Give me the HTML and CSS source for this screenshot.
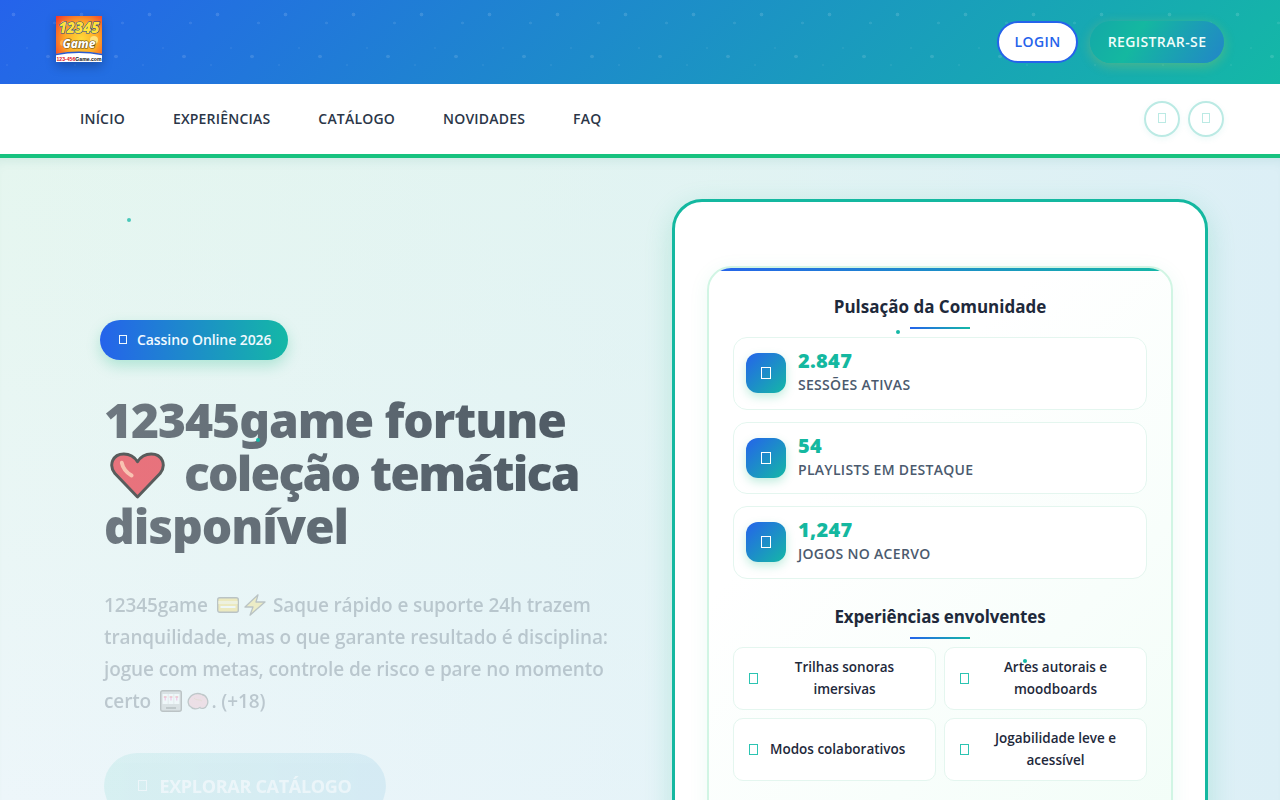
FILE: index.html
```html
<!DOCTYPE html>
<html lang="pt-BR">
<head>
<meta charset="utf-8">
<title>12345game</title>
<link rel="stylesheet" href="styles.css">
</head>
<body>
<header class="topbar">
  <a class="logo" href="#">
    <svg width="46" height="46" viewBox="0 0 46 46" aria-label="12345 Game">
      <defs>
        <radialGradient id="lg" cx="55%" cy="50%" r="72%"><stop offset="0" stop-color="#ffd93a"/><stop offset=".5" stop-color="#fda925"/><stop offset="1" stop-color="#f3382c"/></radialGradient>
      </defs>
      <rect width="46" height="46" fill="url(#lg)"/>
      <circle cx="8" cy="8" r="3" fill="#ffc46a"/><circle cx="38" cy="24" r="4" fill="#ffe27a"/><circle cx="7" cy="27" r="3" fill="#ffb04a"/>
      <text x="23" y="17" class="logo-num" text-anchor="middle" textLength="41" lengthAdjust="spacingAndGlyphs">12345</text>
      <text x="23" y="32" class="logo-game" text-anchor="middle" textLength="33" lengthAdjust="spacingAndGlyphs">Game</text>
      <path d="M0 38 Q23 34 46 38 V46 H0Z" fill="#fff"/>
      <path d="M0 38.5 Q23 34 46 38.5" fill="none" stroke="#2a5bd0" stroke-width="1.4"/>
      <text x="0.5" y="45" class="logo-url" textLength="45" lengthAdjust="spacingAndGlyphs"><tspan fill="#e01020">123-456</tspan><tspan fill="#111">Game.com</tspan></text>
    </svg>
  </a>
  <div class="auth">
    <a class="btn-login" href="#">LOGIN</a>
    <a class="btn-register" href="#">REGISTRAR-SE</a>
  </div>
</header>
<nav class="mainnav">
  <ul class="navlinks">
    <li><a href="#">INÍCIO</a></li>
    <li><a href="#">EXPERIÊNCIAS</a></li>
    <li><a href="#">CATÁLOGO</a></li>
    <li><a href="#">NOVIDADES</a></li>
    <li><a href="#">FAQ</a></li>
  </ul>
  <div class="navicons">
    <span class="circle"><i class="tofu"></i></span>
    <span class="circle"><i class="tofu"></i></span>
  </div>
</nav>
<main class="hero">
  <i class="spark s1"></i><i class="spark s2"></i><i class="spark s3"></i><i class="spark s4"></i>
  <section class="intro">
    <div class="badge"><i class="tofu"></i><span>Cassino Online 2026</span></div>
    <h1>12345game fortune<br><svg class="heart" viewBox="0 0 56 50"><path d="M28 47 L5 23 C-2 14 3 3 14 3 C20 3 25 6 28 11 C31 6 36 3 42 3 C53 3 58 14 51 23 Z" fill="#e8414f" stroke="#222" stroke-width="3" stroke-linejoin="round"/><path d="M12 12 C13 17 17 22 22 25" fill="none" stroke="#ffb09a" stroke-width="4" stroke-linecap="round"/></svg><span class="tight">coleção temática</span><br>disponível</h1>
    <p class="lead">12345game
      <svg class="emoji em-first" viewBox="0 0 22 22"><rect x="0.7" y="3.7" width="20.6" height="14.6" rx="2" fill="#f7c81e" stroke="#333" stroke-width="1.4"/><rect x="1.4" y="7" width="19.2" height="3" fill="#ffe99a"/><rect x="3.5" y="12" width="15" height="2" fill="#fff"/></svg><svg class="emoji" viewBox="0 0 22 22"><path d="M14 0.8 L1 13 H9 L6 21.2 L21 8 H12 Z" fill="#f8d23a" stroke="#333" stroke-width="1.3" stroke-linejoin="round"/></svg>
      Saque rápido e suporte 24h trazem tranquilidade, mas o que garante resultado é disciplina: jogue com metas, controle de risco e pare no momento certo
      <svg class="emoji em-first" viewBox="0 0 22 22"><rect x="0.7" y="0.7" width="20.6" height="20.6" rx="2" fill="#aaa" stroke="#333" stroke-width="1.4"/><rect x="2.6" y="4" width="5.2" height="10" fill="#fff"/><rect x="8.4" y="4" width="5.2" height="10" fill="#fff"/><rect x="14.2" y="4" width="5.2" height="10" fill="#fff"/><path d="M3.8 7h2.8M9.6 7h2.8M15.4 7h2.8" stroke="#e33" stroke-width="1.4"/><path d="M5.2 7v3.5M11 7v3.5M16.8 7v3.5" stroke="#f2a" stroke-width="1"/><rect x="6" y="17" width="10" height="2" fill="#444"/></svg><svg class="emoji" viewBox="0 0 22 22"><path d="M2.5 8 C4.5 3.5 11 2.5 15 4.5 C20 5.5 22 11.5 20 15 C18.5 19 14 19 13 17.5 C10 19.5 5.5 19 4 17 C0.5 15.5 0.5 10 2.5 8Z" fill="#f4a0b5" stroke="#444" stroke-width="1.3"/><path d="M7 8 C9 11 13 9 15 11" fill="none" stroke="#c96" stroke-width=".8"/></svg>. (+18)</p>
    <a class="cta" href="#"><i class="tofu"></i><span>EXPLORAR CATÁLOGO</span></a>
  </section>
  <aside class="device">
    <div class="panel">
      <h2>Pulsação da Comunidade</h2>
      <div class="stats">
        <div class="stat"><span class="stat-icon"><i class="tofu"></i></span><div class="stat-text"><strong>2.847</strong><span>SESSÕES ATIVAS</span></div></div>
        <div class="stat"><span class="stat-icon"><i class="tofu"></i></span><div class="stat-text"><strong>54</strong><span>PLAYLISTS EM DESTAQUE</span></div></div>
        <div class="stat"><span class="stat-icon"><i class="tofu"></i></span><div class="stat-text"><strong>1,247</strong><span>JOGOS NO ACERVO</span></div></div>
      </div>
      <h2 class="second">Experiências envolventes</h2>
      <div class="features">
        <div class="feature"><i class="tofu"></i><span>Trilhas sonoras imersivas</span></div>
        <div class="feature"><i class="tofu"></i><span>Artes autorais e moodboards</span></div>
        <div class="feature"><i class="tofu"></i><span>Modos colaborativos</span></div>
        <div class="feature"><i class="tofu"></i><span>Jogabilidade leve e acessível</span></div>
      </div>
    </div>
  </aside>
</main>
</body>
</html>
```
FILE: styles.css
```css
* { box-sizing: border-box; }
html, body { margin: 0; height: 800px; overflow: hidden; }
body { font-family: "Open Sans", "Noto Sans", sans-serif; color: #1e293b; background: #fff; }
a { text-decoration: none; color: inherit; }
ul { list-style: none; margin: 0; padding: 0; }
i { font-style: normal; }

.tofu { display: inline-block; width: 9px; height: 11px; border: 1px solid currentColor; flex: none; }

.topbar {
  height: 84px; padding: 0 56px; display: flex; align-items: center; justify-content: space-between;
  background-color: #14b8a6;
  background-image:
    radial-gradient(circle at 13.5px 14.5px, rgba(255,255,255,.13) 1.5px, transparent 2.2px),
    radial-gradient(circle at 54.5px 23px, rgba(255,255,255,.09) 1.1px, transparent 1.7px),
    radial-gradient(circle at 48px 56.5px, rgba(255,255,255,.12) 1.5px, transparent 2.1px),
    radial-gradient(circle at 27px 48px, rgba(255,255,255,.05) 1px, transparent 1.5px),
    radial-gradient(circle at 7px 65px, rgba(255,255,255,.05) 1px, transparent 1.5px),
    linear-gradient(135deg, #2563eb 0%, #14b8a6 100%);
  background-size: 68px 84px, 68px 84px, 68px 84px, 68px 84px, 68px 84px, 100% 100%;
}
.logo { display: block; width: 46px; height: 46px; margin-top: -6px; box-shadow: 0 4px 10px rgba(0,0,0,.25); }
.logo svg { display: block; }
.logo-num { font: italic 900 15px "Noto Sans", sans-serif; fill: #ffe23a; stroke: #124a9c; stroke-width: 1.2px; paint-order: stroke; }
.logo-game { font: italic 800 13px "Noto Sans", sans-serif; fill: #fff; stroke: #6b4a10; stroke-width: 1.2px; paint-order: stroke; }
.logo-url { font: 700 5.2px "Liberation Sans", sans-serif; }

.auth { display: flex; align-items: center; gap: 12px; }
.btn-login, .btn-register { font-size: 14px; font-weight: 600; letter-spacing: .4px; border-radius: 21px; display: flex; align-items: center; justify-content: center; height: 42px; padding-bottom: 2px; }
.btn-login { width: 81px; background: #fff; color: #2563eb; border: 2px solid #2563eb; }
.btn-register { width: 134px; color: #f0fdfa; box-shadow: 0 3px 12px rgba(210,200,60,.3); background: linear-gradient(120deg, #14a8a8 0%, #14b8a0 35%, #2286c8 100%); }

.mainnav { height: 74px; background: #fff; border-bottom: 4px solid #17c27f; padding: 0 56px; display: flex; align-items: center; justify-content: space-between; }
.navlinks { display: flex; }
.navlinks a { display: block; padding: 0 24px 2px; font-size: 14px; font-weight: 600; letter-spacing: .2px; color: #2b3648; }
.navicons { display: flex; gap: 8px; }
.circle { width: 36px; height: 36px; border-radius: 50%; border: 2px solid #bbeae4; color: #bbeae4; display: flex; align-items: center; justify-content: center; padding-bottom: 2px; box-shadow: 0 2px 6px rgba(20,184,166,.08); }
.circle .tofu { width: 8px; height: 10px; }

.hero {
  position: relative; height: 642px; overflow: hidden; padding: 41px 72px 0;
  display: grid; grid-template-columns: 536px 536px; gap: 64px; align-items: start;
  background: linear-gradient(90deg, rgba(220,240,246,0) 0%, rgba(220,240,246,.5) 60%, #dceff6 100%), linear-gradient(180deg, #e5f6ef 0%, #edf6fa 100%);
  box-shadow: inset 0 10px 14px -10px rgba(16,130,110,.14);
}
.spark { position: absolute; z-index: 3; width: 4px; height: 4px; border-radius: 50%; background: #14b8a6; }
.s1 { left: 127px; top: 60px; opacity: .75; }
.s2 { left: 256px; top: 280px; }
.s3 { left: 896px; top: 172px; }
.s4 { left: 1023px; top: 501px; }

.intro { padding: 121px 0 0 32px; }
.badge { display: inline-flex; align-items: center; gap: 10px; height: 40px; width: 188px; margin-left: -4px; padding: 0 18px 2px 19px; border-radius: 20px; color: #f0f9ff; font-size: 14px; font-weight: 600; letter-spacing: -.08px; background: linear-gradient(90deg, #2563eb, #14b8a6); box-shadow: 0 6px 14px rgba(16,185,129,.25); white-space: nowrap; }
.badge .tofu { width: 8px; height: 9px; }
h1 { margin: 34px 0 0; width: 500px; font-family: "Noto Sans", sans-serif; font-size: 48px; line-height: 52.8px; font-weight: 900; letter-spacing: -1.1px; white-space: nowrap; color: transparent; background: linear-gradient(90deg, #6e7880, #4d5963); -webkit-background-clip: text; background-clip: text; }
.tight { letter-spacing: -1.8px; }
.heart { width: 55px; height: 49px; vertical-align: -9px; margin: 0 19px 0 6px; opacity: .72; }
.lead { margin: 36px -4px 0 0; font-size: 19px; line-height: 32px; font-weight: 600; letter-spacing: -.12px; color: #334155; opacity: .25; }
.emoji { width: 22px; height: 22px; vertical-align: -4px; margin: 0 2.5px; }
.em-first { margin-left: 4px; }
.cta { display: inline-flex; align-items: center; justify-content: center; gap: 12px; margin-top: 36px; width: 282px; height: 66px; border-radius: 33px; color: #fff; font-size: 18px; font-weight: 700; letter-spacing: -.3px; background: linear-gradient(90deg, #14b8a6, #1a90c8); opacity: .09; }

.device { background: #fff; border: 3px solid #14b8a0; border-radius: 30px; padding: 64px 32px 32px; height: 700px; box-shadow: 0 8px 28px rgba(16,185,129,.2); }
.panel { position: relative; border: 2px solid #d1f5e4; border-radius: 24px; padding: 26px 24px; height: 640px; overflow: hidden; background: linear-gradient(135deg, #fff 30%, #f1fdf7 100%); box-shadow: 0 4px 20px rgba(16,185,129,.08); }
.panel::before { content: ""; position: absolute; left: 0; right: 0; top: 0; height: 3px; background: linear-gradient(90deg, #2563eb, #14b8a6); }
h2 { margin: 0; font-size: 17px; line-height: 26px; font-weight: 700; text-align: center; color: #1e293b; position: relative; }
h2::after { content: ""; display: block; width: 60px; height: 2px; margin: 7px auto 0; background: linear-gradient(90deg, #2563eb, #14b8a6); }
.second { margin-top: 25px; letter-spacing: -.15px; }
.stats { display: flex; flex-direction: column; gap: 12px; margin-top: 8px; }
.stat { height: 72.5px; display: flex; align-items: center; gap: 12px; padding: 0 12px; border: 1px solid #e4f6ef; border-radius: 14px; background: #fff; }
.stat-icon { width: 40px; height: 40px; border-radius: 12px; display: flex; align-items: center; justify-content: center; color: #fff; background: linear-gradient(135deg, #2563eb, #14b8a6); box-shadow: 0 4px 10px rgba(16,185,129,.25); }
.stat-icon .tofu { width: 10px; height: 12px; }
.stat-text { display: flex; flex-direction: column; }
.stat-text strong { font-family: "Noto Sans", sans-serif; font-size: 20px; line-height: 24px; font-weight: 900; letter-spacing: .3px; color: #14b8a0; }
.stat-text span { font-size: 14px; line-height: 24px; letter-spacing: .3px; color: #4b5a6e; font-weight: 600; }
.features { display: grid; grid-template-columns: 1fr 1fr; gap: 8px; margin-top: 8px; }
.feature { display: flex; align-items: center; gap: 12px; min-height: 63px; padding: 8px 16px 8px 15px; border: 1px solid #e4f6ef; border-radius: 10px; background: #fff; font-size: 13.5px; line-height: 22px; font-weight: 600; color: #1e293b; text-align: center; }
.feature .tofu { color: #2cc4b2; }
```
